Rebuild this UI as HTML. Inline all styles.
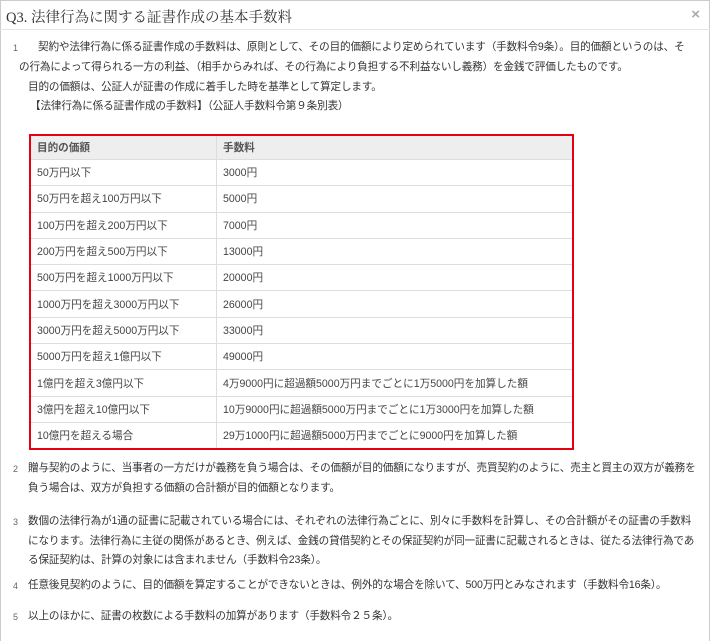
<!DOCTYPE html>
<html><head><meta charset="utf-8"><style>
body{margin:0;width:710px;height:630px;overflow:hidden;background:#fff;font-family:"Liberation Sans","Noto Sans CJK JP",sans-serif;color:#333;}
.frame{position:absolute;left:0;top:0;width:708px;height:640px;border:1px solid #ccc;border-bottom:none;}
.hd{position:absolute;left:0;top:0;width:710px;height:29px;border-bottom:1px solid #e5e5e5;}
.hd .t{position:absolute;left:6px;top:6px;font-family:"Liberation Serif","Noto Serif CJK SC",serif;font-size:14.5px;color:#333;}
.hd .x{position:absolute;right:10px;top:6px;font-size:15px;color:#aaa;font-weight:bold;}
p{margin:0;position:absolute;font-size:10.6px;line-height:19.5px;color:#333;white-space:nowrap;letter-spacing:-0.15px;}
.n{position:absolute;font-size:9px;color:#666;}
table{position:absolute;left:29px;top:134px;width:545px;border:2px solid #e60012;border-collapse:collapse;font-size:10.6px;}
td{height:25.3px;padding:0 0 0 6px;border:1px solid #ddd;color:#444;white-space:nowrap;}
tr.h td{background:#eee;height:23px;font-weight:bold;color:#555;}
td:first-child{width:179px;}
</style></head><body>
<div class="frame"></div>
<div class="hd"><div class="t">Q3. 法律行為に関する証書作成の基本手数料</div><div class="x">×</div></div>
<span class="n" style="left:13px;top:43px">1</span>
<p style="left:38px;top:38px">契約や法律行為に係る証書作成の手数料は、原則として、その目的価額により定められています（手数料令9条）。目的価額というのは、そ</p>
<p style="left:19px;top:58px">の行為によって得られる一方の利益、（相手からみれば、その行為により負担する不利益ないし義務）を金銭で評価したものです。</p>
<p style="left:28px;top:78px">目的の価額は、公証人が証書の作成に着手した時を基準として算定します。</p>
<p style="left:30px;top:97px">【法律行為に係る証書作成の手数料】（公証人手数料令第９条別表）</p>
<table>
<tr class="h"><td>目的の価額</td><td>手数料</td></tr>
<tr><td>50万円以下</td><td>3000円</td></tr>
<tr><td>50万円を超え100万円以下</td><td>5000円</td></tr>
<tr><td>100万円を超え200万円以下</td><td>7000円</td></tr>
<tr><td>200万円を超え500万円以下</td><td>13000円</td></tr>
<tr><td>500万円を超え1000万円以下</td><td>20000円</td></tr>
<tr><td>1000万円を超え3000万円以下</td><td>26000円</td></tr>
<tr><td>3000万円を超え5000万円以下</td><td>33000円</td></tr>
<tr><td>5000万円を超え1億円以下</td><td>49000円</td></tr>
<tr><td>1億円を超え3億円以下</td><td>4万9000円に超過額5000万円までごとに1万5000円を加算した額</td></tr>
<tr><td>3億円を超え10億円以下</td><td>10万9000円に超過額5000万円までごとに1万3000円を加算した額</td></tr>
<tr><td>10億円を超える場合</td><td>29万1000円に超過額5000万円までごとに9000円を加算した額</td></tr>
</table>
<span class="n" style="left:13px;top:464px">2</span>
<p style="left:28px;top:459px">贈与契約のように、当事者の一方だけが義務を負う場合は、その価額が目的価額になりますが、売買契約のように、売主と買主の双方が義務を</p>
<p style="left:28px;top:479px">負う場合は、双方が負担する価額の合計額が目的価額となります。</p>
<span class="n" style="left:13px;top:517px">3</span>
<p style="left:28px;top:512px">数個の法律行為が1通の証書に記載されている場合には、それぞれの法律行為ごとに、別々に手数料を計算し、その合計額がその証書の手数料</p>
<p style="left:28px;top:532px">になります。法律行為に主従の関係があるとき、例えば、金銭の貸借契約とその保証契約が同一証書に記載されるときは、従たる法律行為であ</p>
<p style="left:28px;top:551px">る保証契約は、計算の対象には含まれません（手数料令23条）。</p>
<span class="n" style="left:13px;top:581px">4</span>
<p style="left:28px;top:576px">任意後見契約のように、目的価額を算定することができないときは、例外的な場合を除いて、500万円とみなされます（手数料令16条）。</p>
<span class="n" style="left:13px;top:612px">5</span>
<p style="left:28px;top:607px">以上のほかに、証書の枚数による手数料の加算があります（手数料令２５条）。</p>
</body></html>
